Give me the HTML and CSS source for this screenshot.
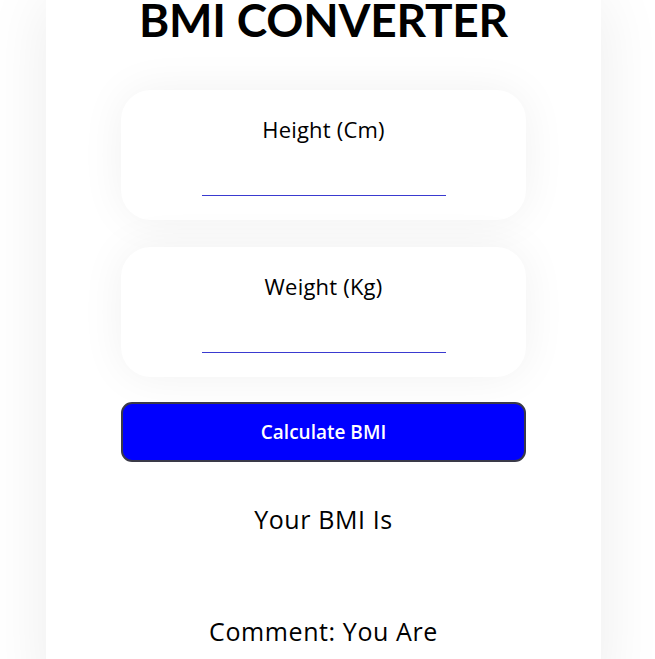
FILE: index.html
```html
<!DOCTYPE html>
<html lang="en">
<head>
<meta charset="utf-8">
<title>BMI Converter</title>
<link rel="stylesheet" href="styles.css">
</head>
<body>
<main class="container">
  <h1 class="title">BMI CONVERTER</h1>
  <div class="card">
    <label class="label" for="height">Height (Cm)</label>
    <input class="field" id="height" type="text">
  </div>
  <div class="card">
    <label class="label" for="weight">Weight (Kg)</label>
    <input class="field" id="weight" type="text">
  </div>
  <button class="calc-btn" type="button">Calculate BMI</button>
  <p class="result">Your BMI Is</p>
  <p class="comment">Comment: You Are</p>
</main>
</body>
</html>
```

FILE: styles.css
```css
html, body {
  margin: 0;
  padding: 0;
  background: #ffffff;
  height: 100%;
  overflow: hidden;
}

body {
  font-family: "Open Sans", "Lato", sans-serif;
  color: #000;
  padding-right: 8px;
}

.container {
  width: 555px;
  margin: 0 auto;
  min-height: 700px;
  background: #fff;
  box-shadow: 0 0 60px rgba(0, 0, 0, 0.08);
  display: flex;
  flex-direction: column;
  align-items: center;
}

.title {
  font-family: "Lato", "Open Sans", sans-serif;
  margin: 0;
  font-size: 46px;
  line-height: 40px;
  font-weight: 700;
  letter-spacing: -0.2px;
  height: 90px;
}

.card {
  width: 405px;
  height: 130px;
  box-sizing: border-box;
  border-radius: 30px;
  background: #fff;
  box-shadow: 0 0 45px rgba(0, 0, 0, 0.06);
  display: flex;
  flex-direction: column;
  align-items: center;
  padding-top: 26px;
  margin-bottom: 27px;
}

.label {
  font-size: 22px;
  line-height: 26px;
  letter-spacing: 0.2px;
}

.field {
  margin-top: 29px;
  width: 244px;
  height: 25px;
  box-sizing: border-box;
  border: none;
  border-bottom: 1px solid #3a3ad0;
  outline: none;
  background: transparent;
  font: inherit;
}

.calc-btn {
  margin-top: -2px;
  width: 405px;
  height: 60px;
  background: #0000ff;
  color: #fff;
  border: 2px solid #3a3a48;
  border-radius: 11px;
  font-family: inherit;
  font-size: 19px;
  font-weight: 600;
}

.result {
  margin: 42px 0 0;
  font-size: 25px;
  line-height: 30px;
  letter-spacing: 0.6px;
}

.comment {
  margin: 82px 0 0;
  font-size: 25px;
  line-height: 30px;
  letter-spacing: 0.6px;
}
```
